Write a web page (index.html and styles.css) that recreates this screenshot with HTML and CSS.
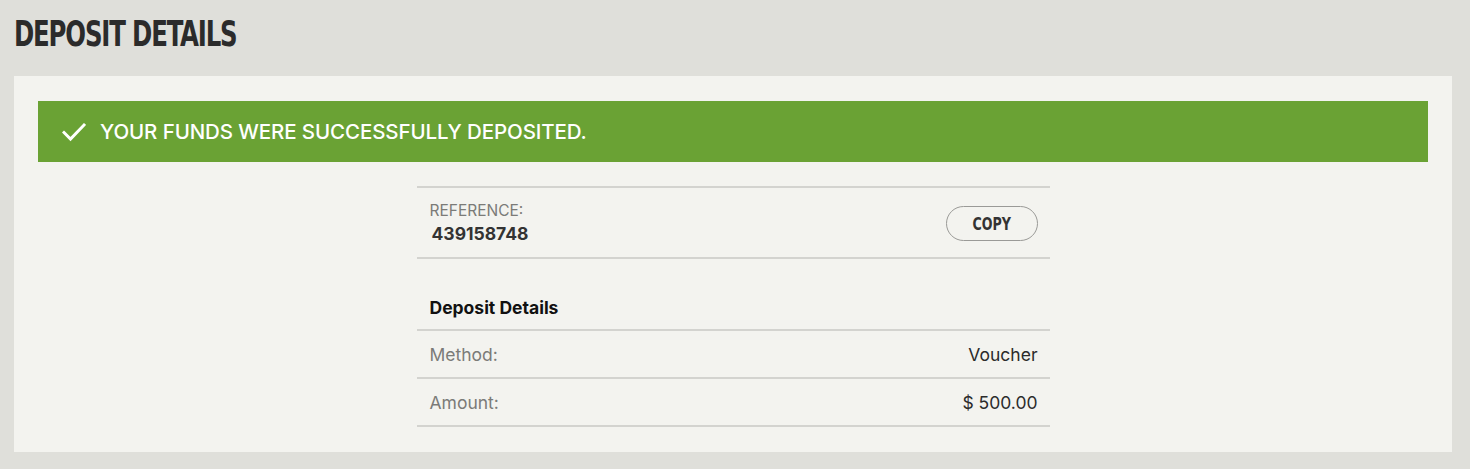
FILE: index.html
```html
<!DOCTYPE html>
<html>
<head>
<meta charset="utf-8">
<link rel="stylesheet" href="styles.css">
</head>
<body>
<div class="page">
  <h1 class="title"><span class="title-text">DEPOSIT DETAILS</span></h1>
  <div class="panel">
    <div class="banner">
      <svg class="check" width="24" height="20" viewBox="0 0 24 20"><path d="M2 10.5 L8.5 17 L22 3" fill="none" stroke="#fff" stroke-width="3" stroke-linecap="square"/></svg>
      <span class="banner-text">YOUR FUNDS WERE SUCCESSFULLY DEPOSITED.</span>
    </div>
    <div class="details">
      <div class="ref-row">
        <div class="ref-info">
          <div class="ref-label">REFERENCE:</div>
          <div class="ref-num">439158748</div>
        </div>
        <button class="copy"><span class="copy-text">COPY</span></button>
      </div>
      <div class="section-head">Deposit Details</div>
      <div class="row"><span class="k">Method:</span><span class="v">Voucher</span></div>
      <div class="row"><span class="k">Amount:</span><span class="v">$ 500.00</span></div>
    </div>
  </div>
</div>
</body>
</html>
```
FILE: styles.css
```css
html, body { margin: 0; padding: 0; }
body {
  background: #dfdfda;
  font-family: "Inter", "DejaVu Sans", sans-serif;
  width: 1470px;
  height: 469px;
  overflow: hidden;
}
.page { padding: 0 18px 0 14px; }
.title {
  margin: 0;
  height: 76px;
  display: flex;
  align-items: center;
  padding-bottom: 8px;
  box-sizing: border-box;
}
.title-text {
  font-family: "DejaVu Sans", sans-serif;
  font-stretch: condensed;
  font-weight: bold;
  font-size: 35px;
  letter-spacing: -1.5px;
  color: #2b2b2b;
  display: inline-block;
  transform: scaleX(0.775);
  transform-origin: left center;
}
.panel {
  background: #f3f3ef;
  height: 376px;
  padding: 25px 24px 0 24px;
  box-sizing: border-box;
}
.banner {
  background: #6aa234;
  height: 61px;
  display: flex;
  align-items: center;
  padding-left: 24px;
  gap: 14px;
}
.check { display: block; }
.banner-text {
  color: #fff;
  font-size: 20.5px;
  font-weight: 500;
  letter-spacing: -0.1px;
}
.details {
  width: 633px;
  margin: 24px auto 0 auto;
  border-top: 2px solid #d3d3cf;
}
.ref-row {
  height: 69px;
  border-bottom: 2px solid #d3d3cf;
  display: flex;
  align-items: center;
  justify-content: space-between;
  padding: 0 12px 0 13px;
}
.ref-label { font-size: 15.5px; color: #7b7b78; margin-top: 0; line-height: 18px; }
.ref-num { font-size: 17.5px; font-weight: 700; color: #333; margin-top: 4px; line-height: 20px; padding-left: 2px; }
.copy {
  width: 92px;
  height: 35px;
  border: 1.5px solid #9a9a97;
  border-radius: 18px;
  background: transparent;
  display: flex;
  align-items: center;
  justify-content: center;
  padding: 0;
  margin-top: 2px;
}
.copy-text {
  font-family: "DejaVu Sans", sans-serif;
  font-stretch: condensed;
  font-weight: bold;
  font-size: 18px;
  color: #333;
  display: inline-block;
  transform: scaleX(0.78);
}
.section-head {
  height: 72px;
  box-sizing: border-box;
  padding: 38px 13px 0 13px;
  font-size: 17.5px;
  font-weight: 700;
  color: #111;
  border-bottom: 2px solid #d3d3cf;
}
.row {
  height: 48px;
  box-sizing: border-box;
  border-bottom: 2px solid #d3d3cf;
  display: flex;
  align-items: center;
  justify-content: space-between;
  padding: 0 12px 0 13px;
  font-size: 17.5px;
}
.k { color: #7b7b78; }
.v { color: #2b2b2b; }
```
